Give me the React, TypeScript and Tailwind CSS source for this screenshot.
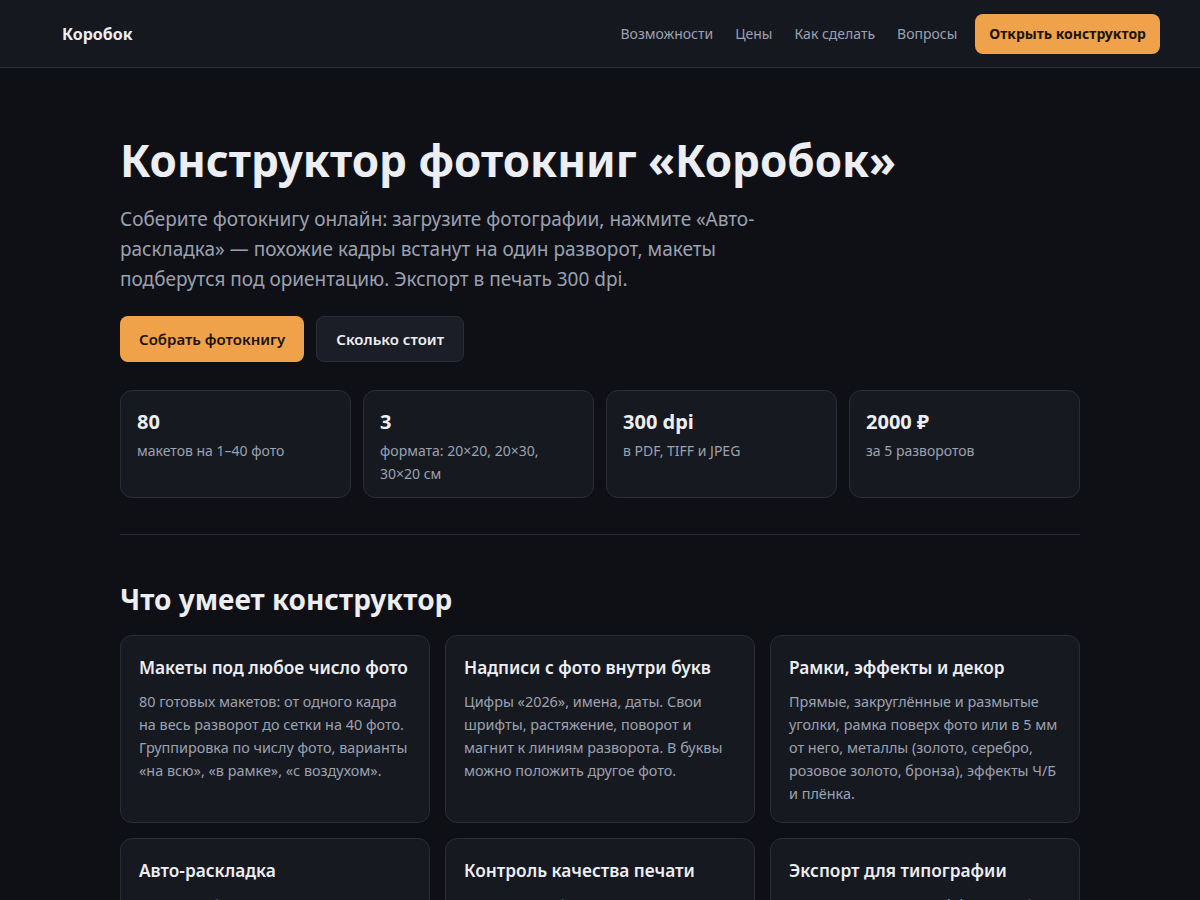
import React from "react";

const stats = [
  { value: "80", label: "макетов на 1–40 фото" },
  { value: "3", label: "формата: 20×20, 20×30, 30×20 см" },
  { value: "300 dpi", label: "в PDF, TIFF и JPEG" },
  { value: "2000 ₽", label: "за 5 разворотов" },
];

const features = [
  {
    title: "Макеты под любое число фото",
    text: "80 готовых макетов: от одного кадра на весь разворот до сетки на 40 фото. Группировка по числу фото, варианты «на всю», «в рамке», «с воздухом».",
  },
  {
    title: "Надписи с фото внутри букв",
    text: "Цифры «2026», имена, даты. Свои шрифты, растяжение, поворот и магнит к линиям разворота. В буквы можно положить другое фото.",
  },
  {
    title: "Рамки, эффекты и декор",
    text: "Прямые, закруглённые и размытые уголки, рамка поверх фото или в 5 мм от него, металлы (золото, серебро, розовое золото, бронза), эффекты Ч/Б и плёнка.",
  },
  {
    title: "Авто-раскладка",
    text: "Загрузите фото и нажмите одну кнопку: похожие кадры встанут на один разворот, макеты подберутся под ориентацию.",
  },
  {
    title: "Контроль качества печати",
    text: "Для каждого фото видно, хватит ли разрешения для печати в выбранном формате.",
  },
  {
    title: "Экспорт для типографии",
    text: "PDF, TIFF и JPEG в 300 dpi, ICC-профиль и вылеты под обрез.",
  },
];

export default function App() {
  return (
    <div className="min-h-screen bg-[#0f1015] text-[#eceef3] font-['Noto_Sans',sans-serif]">
      <header className="h-[68px] border-b border-[#2a2d36] bg-[#161820]">
        <div className="flex h-full items-center justify-between pl-[62px] pr-10">
          <a className="text-base font-bold text-[#eceef3]">Коробок</a>
          <nav className="flex items-center gap-[22px] text-sm text-[#9ca1b0]">
            <a>Возможности</a>
            <a>Цены</a>
            <a>Как сделать</a>
            <a>Вопросы</a>
            <button
              type="button"
              className="ml-[-4px] h-10 rounded-lg bg-[#f0a24a] px-[14px] text-sm font-bold text-[#1a1206]"
            >
              Открыть конструктор
            </button>
          </nav>
        </div>
      </header>

      <main className="mx-auto max-w-[960px] pt-[67px]">
        <h1 className="text-[44px] leading-[1.15] font-bold text-[#eceef3]">
          Конструктор фотокниг «Коробок»
        </h1>
        <p className="mt-[18px] max-w-[660px] text-[19px] leading-[1.6] text-[#9ca1b0]">
          Соберите фотокнигу онлайн: загрузите фотографии, нажмите «Авто-раскладка» — похожие
          кадры встанут на один разворот, макеты подберутся под ориентацию. Экспорт в печать 300 dpi.
        </p>

        <div className="mt-[21px] flex gap-3">
          <button
            type="button"
            className="h-[46px] rounded-lg bg-[#f0a24a] px-[19px] text-[15px] font-semibold text-[#1a1206]"
          >
            Собрать фотокнигу
          </button>
          <button
            type="button"
            className="h-[46px] rounded-lg border border-[#2a2d36] bg-[#1b1e26] px-[19px] text-[15px] font-semibold text-[#eceef3]"
          >
            Сколько стоит
          </button>
        </div>

        <div className="mt-7 grid grid-cols-4 gap-3">
          {stats.map((s) => (
            <div
              key={s.value}
              className="h-[108px] rounded-xl border border-[#2a2d36] bg-[#171920] px-4 pt-[17px]"
            >
              <div className="text-xl leading-7 font-bold text-[#eceef3]">{s.value}</div>
              <div className="mt-[3px] text-sm leading-[23px] text-[#9ca1b0]">{s.label}</div>
            </div>
          ))}
        </div>

        <hr className="mt-9 border-[#2a2d36]" />

        <h2 className="mt-[44px] text-[28px] leading-10 font-bold text-[#eceef3]">
          Что умеет конструктор
        </h2>

        <div className="mt-4 grid grid-cols-3 gap-[15px] pb-10">
          {features.map((f) => (
            <div
              key={f.title}
              className="min-h-[188px] rounded-xl border border-[#2a2d36] bg-[#171920] pt-[20px] pr-[16px] pb-[17px] pl-[18px]"
            >
              <h3 className="text-[17.3px] leading-6 font-semibold text-[#eceef3]">{f.title}</h3>
              <p className="mt-[10px] pr-[2px] text-[14.4px] leading-[23px] text-[#9ca1b0]">{f.text}</p>
            </div>
          ))}
        </div>
      </main>
    </div>
  );
}
